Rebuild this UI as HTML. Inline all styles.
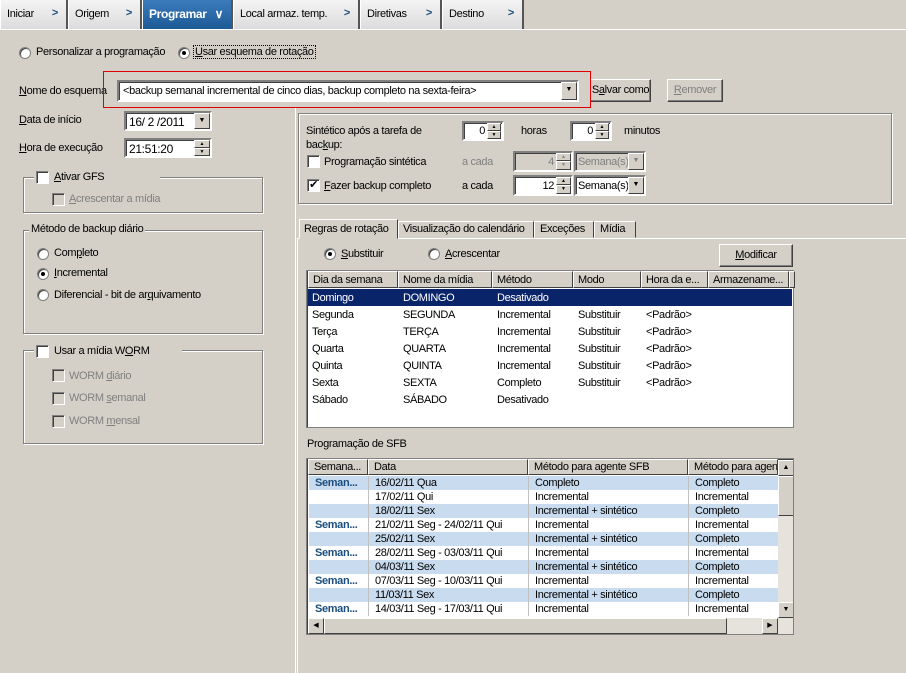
<!DOCTYPE html>
<html><head><meta charset="utf-8"><style>
*{box-sizing:border-box}
body{margin:0;width:906px;height:673px;overflow:hidden;background:#d4d0c8;font-family:"Liberation Sans",sans-serif;font-size:11px;letter-spacing:-0.35px;color:#000;position:relative}
.a{position:absolute;white-space:nowrap}
.tab{position:absolute;top:0;height:29px;background:linear-gradient(#f4f4f4,#dcdcdc);border-right:2px solid #555;border-left:1px solid #fff;padding:8px 0 0 6px;font-size:11px;white-space:nowrap}
.tab .ch{position:absolute;right:8px;top:7px;color:#1b4e7e;font-weight:bold}
.sunk{position:absolute;background:#fff;border:2px solid;border-color:#808080 #fff #fff #808080;box-shadow:inset 1px 1px 0 #404040;white-space:nowrap;overflow:hidden}
.btn{position:absolute;background:#d4d0c8;border:1px solid;border-color:#fff #404040 #404040 #fff;box-shadow:inset -1px -1px 0 #808080;text-align:center;padding-top:4px;white-space:nowrap}
.grp{position:absolute;border:1px solid #808080;box-shadow:1px 1px 0 #fff,inset 1px 1px 0 #fff}
.rad{position:absolute;width:12px;height:12px;border-radius:50%;background:#fff;border:1px solid #808080;box-shadow:inset 1px 1px 0 #404040}
.rad.on::after{content:"";position:absolute;left:3px;top:3px;width:4px;height:4px;border-radius:50%;background:#000}
.cb{position:absolute;width:13px;height:13px;background:#fff;border:1px solid;border-color:#808080 #fff #fff #808080;box-shadow:inset 1px 1px 0 #404040;font-size:11px;line-height:11px;text-align:center}
.cb.dis{background:#d4d0c8}
.dis{color:#808080}
.arr{position:absolute;background:#d4d0c8;border:1px solid;border-color:#fff #404040 #404040 #fff;font-size:7px;text-align:center;line-height:14px;letter-spacing:0}
.lbx{position:absolute;background:#fff;border:1px solid #808080;box-shadow:inset 1px 1px 0 #404040}
.hd{position:absolute;top:0;height:17px;background:#d4d0c8;border:1px solid;border-color:#fff #404040 #404040 #fff;padding:2px 4px;overflow:hidden;white-space:nowrap}
.row{position:absolute;left:1px;right:1px;height:17px}
.row span{position:absolute;top:3px;white-space:nowrap}
.g{position:absolute;left:1px;width:470px;height:14px}
.g span{position:absolute;top:1px;white-space:nowrap}
.g.b{background:#c9dcef}
.g.w{background:#fff}
u{text-decoration:underline}
</style></head><body>
<div class="a" style="left:0;top:29px;width:906px;height:1px;background:#fff"></div>
<div class="tab" style="left:0;width:68px">Iniciar<span class="ch">&gt;</span></div>
<div class="tab" style="left:68px;width:74px">Origem<span class="ch">&gt;</span></div>
<div class="tab" style="left:142px;width:91px;background:linear-gradient(#3c7cbc,#1c5a96);color:#fff;font-weight:bold;font-size:12px;padding-top:7px">Programar<span class="ch" style="color:#fff">&#8744;</span></div>
<div class="tab" style="left:233px;width:127px">Local armaz. temp.<span class="ch">&gt;</span></div>
<div class="tab" style="left:360px;width:82px">Diretivas<span class="ch">&gt;</span></div>
<div class="tab" style="left:442px;width:82px">Destino<span class="ch">&gt;</span></div>

<div class="rad" style="left:19px;top:47px"></div><div class="a" style="left:36px;top:46px">Personalizar a programação</div>
<div class="rad on" style="left:178px;top:47px"></div><div class="a" style="left:193px;top:45px;border:1px dotted #000;padding:0 1px"><u>U</u>sar esquema de rotação</div>

<div class="a" style="left:19px;top:85px"><u>N</u>ome do esquema</div>
<div class="sunk" style="left:117px;top:80px;width:462px;height:22px;padding:3px 4px">&lt;backup semanal incremental de cinco dias, backup completo na sexta-feira&gt;</div>
<div class="arr" style="left:561px;top:82px;width:16px;height:18px">&#9660;</div>
<div class="btn" style="left:590px;top:79px;width:61px;height:23px">S<u>a</u>lvar como</div>
<div class="btn dis" style="left:667px;top:79px;width:56px;height:23px"><u>R</u>emover</div>
<div class="a" style="left:103px;top:71px;width:488px;height:37px;border:1px solid #e00000"></div>

<div class="a" style="left:19px;top:114px"><u>D</u>ata de início</div>
<div class="sunk" style="left:124px;top:111px;width:88px;height:20px;padding:2px 3px;font-size:12px">16/ 2 /2011</div>
<div class="arr" style="left:194px;top:113px;width:16px;height:16px">&#9660;</div>
<div class="a" style="left:19px;top:142px"><u>H</u>ora de execução</div>
<div class="sunk" style="left:124px;top:138px;width:88px;height:20px;padding:2px 3px;font-size:12px">21:51:20</div>
<div class="arr" style="left:194px;top:140px;width:16px;height:8px;line-height:6px;font-size:5px">▲</div>
<div class="arr" style="left:194px;top:148px;width:16px;height:8px;line-height:6px;font-size:5px">▼</div>

<div class="grp" style="left:23px;top:177px;width:240px;height:36px"></div>
<div class="a" style="left:34px;top:170px;background:#d4d0c8;width:126px;height:14px"></div>
<div class="cb" style="left:36px;top:171px"></div><div class="a" style="left:54px;top:171px"><u>A</u>tivar GFS</div>
<div class="cb dis" style="left:52px;top:193px"></div><div class="a dis" style="left:69px;top:193px"><u>A</u>crescentar a mídia</div>

<div class="grp" style="left:23px;top:230px;width:240px;height:104px"></div>
<div class="a" style="left:29px;top:223px;background:#d4d0c8;padding:0 2px">Método de backup diário</div>
<div class="rad" style="left:37px;top:248px"></div><div class="a" style="left:54px;top:247px">Com<u>p</u>leto</div>
<div class="rad on" style="left:37px;top:268px"></div><div class="a" style="left:54px;top:267px"><u>I</u>ncremental</div>
<div class="rad" style="left:37px;top:289px"></div><div class="a" style="left:54px;top:289px">Diferencial - bit de ar<u>q</u>uivamento</div>

<div class="grp" style="left:23px;top:350px;width:240px;height:94px"></div>
<div class="a" style="left:34px;top:343px;background:#d4d0c8;width:148px;height:14px"></div>
<div class="cb" style="left:36px;top:345px"></div><div class="a" style="left:54px;top:345px">Usar a mídia W<u>O</u>RM</div>
<div class="cb dis" style="left:52px;top:369px"></div><div class="a dis" style="left:69px;top:370px">WORM <u>d</u>iário</div>
<div class="cb dis" style="left:52px;top:392px"></div><div class="a dis" style="left:69px;top:392px">WORM <u>s</u>emanal</div>
<div class="cb dis" style="left:52px;top:415px"></div><div class="a dis" style="left:69px;top:415px">WORM <u>m</u>ensal</div>

<div class="a" style="left:295px;top:108px;width:1px;height:565px;background:#fff"></div>
<div class="grp" style="left:298px;top:113px;width:594px;height:91px"></div>
<div class="a" style="left:306px;top:124px;line-height:14px">Sintético após a tarefa de<br>bac<u>k</u>up:</div>
<div class="sunk" style="left:462px;top:121px;width:42px;height:20px;text-align:right;padding:2px 17px 0 0">0</div>
<div class="arr" style="left:487px;top:123px;width:14px;height:8px;font-size:5px;line-height:6px">▲</div><div class="arr" style="left:487px;top:131px;width:14px;height:8px;font-size:5px;line-height:6px">▼</div>
<div class="a" style="left:521px;top:125px">horas</div>
<div class="sunk" style="left:570px;top:121px;width:42px;height:20px;text-align:right;padding:2px 17px 0 0">0</div>
<div class="arr" style="left:595px;top:123px;width:14px;height:8px;font-size:5px;line-height:6px">▲</div><div class="arr" style="left:595px;top:131px;width:14px;height:8px;font-size:5px;line-height:6px">▼</div>
<div class="a" style="left:624px;top:125px">minutos</div>
<div class="cb" style="left:307px;top:155px"></div><div class="a" style="left:324px;top:156px">Programação sintética</div>
<div class="a dis" style="left:462px;top:156px">a cada</div>
<div class="sunk" style="left:513px;top:151px;width:60px;height:21px;background:#d4d0c8;color:#808080;text-align:right;padding:3px 17px 0 0">4</div>
<div class="arr" style="left:556px;top:153px;width:15px;height:8px;font-size:5px;line-height:6px;color:#808080">▲</div><div class="arr" style="left:556px;top:161px;width:15px;height:9px;font-size:5px;line-height:6px;color:#808080">▼</div>
<div class="sunk" style="left:574px;top:151px;width:72px;height:21px;background:#d4d0c8;color:#808080;padding:3px 2px">Semana(s)</div>
<div class="arr" style="left:628px;top:153px;width:16px;height:17px;color:#808080">▼</div>
<div class="cb" style="left:307px;top:179px">✔</div><div class="a" style="left:324px;top:180px"><u>F</u>azer backup completo</div>
<div class="a" style="left:462px;top:180px">a cada</div>
<div class="sunk" style="left:513px;top:175px;width:60px;height:21px;text-align:right;padding:3px 17px 0 0">12</div>
<div class="arr" style="left:556px;top:177px;width:15px;height:8px;font-size:5px;line-height:6px">▲</div><div class="arr" style="left:556px;top:185px;width:15px;height:9px;font-size:5px;line-height:6px">▼</div>
<div class="sunk" style="left:574px;top:175px;width:72px;height:21px;padding:3px 2px">Semana(s)</div>
<div class="arr" style="left:628px;top:177px;width:16px;height:17px">▼</div>

<div class="a" style="left:297px;top:238px;width:609px;height:1px;background:#fff"></div>
<div class="a" style="left:297px;top:238px;width:1px;height:435px;background:#fff"></div>
<div class="a" style="left:299px;top:219px;width:99px;height:20px;background:#d4d0c8;border:1px solid;border-color:#fff #404040 transparent #fff;padding:3px 4px">Regras de rotação</div>
<div class="a" style="left:398px;top:221px;width:136px;height:17px;border:1px solid;border-color:#fff #404040 transparent #fff;padding:1px 4px">Visualização do calendário</div>
<div class="a" style="left:534px;top:221px;width:60px;height:17px;border:1px solid;border-color:#fff #404040 transparent #fff;padding:1px 5px">Exceções</div>
<div class="a" style="left:594px;top:221px;width:42px;height:17px;border:1px solid;border-color:#fff #404040 transparent #fff;padding:1px 5px">Mídia</div>

<div class="rad on" style="left:324px;top:248px"></div><div class="a" style="left:341px;top:248px"><u>S</u>ubstituir</div>
<div class="rad" style="left:428px;top:248px"></div><div class="a" style="left:445px;top:248px"><u>A</u>crescentar</div>
<div class="btn" style="left:719px;top:244px;width:74px;height:23px"><u>M</u>odificar</div>

<div class="lbx" style="left:306px;top:270px;width:488px;height:158px">
<div class="hd" style="left:1px;width:90px">Dia da semana</div>
<div class="hd" style="left:91px;width:94px">Nome da mídia</div>
<div class="hd" style="left:185px;width:81px">Método</div>
<div class="hd" style="left:266px;width:68px">Modo</div>
<div class="hd" style="left:334px;width:67px">Hora da e...</div>
<div class="hd" style="left:401px;width:81px">Armazename...</div>
<div class="hd" style="left:482px;width:6px;padding:0"></div>
<div class="row" style="top:18px;background:#0a246a;color:#fff"><span style="left:4px">Domingo</span><span style="left:95px">DOMINGO</span><span style="left:189px">Desativado</span></div>
<div class="row" style="top:35px"><span style="left:4px">Segunda</span><span style="left:95px">SEGUNDA</span><span style="left:189px">Incremental</span><span style="left:270px">Substituir</span><span style="left:338px">&lt;Padrão&gt;</span></div>
<div class="row" style="top:52px"><span style="left:4px">Terça</span><span style="left:95px">TERÇA</span><span style="left:189px">Incremental</span><span style="left:270px">Substituir</span><span style="left:338px">&lt;Padrão&gt;</span></div>
<div class="row" style="top:69px"><span style="left:4px">Quarta</span><span style="left:95px">QUARTA</span><span style="left:189px">Incremental</span><span style="left:270px">Substituir</span><span style="left:338px">&lt;Padrão&gt;</span></div>
<div class="row" style="top:86px"><span style="left:4px">Quinta</span><span style="left:95px">QUINTA</span><span style="left:189px">Incremental</span><span style="left:270px">Substituir</span><span style="left:338px">&lt;Padrão&gt;</span></div>
<div class="row" style="top:103px"><span style="left:4px">Sexta</span><span style="left:95px">SEXTA</span><span style="left:189px">Completo</span><span style="left:270px">Substituir</span><span style="left:338px">&lt;Padrão&gt;</span></div>
<div class="row" style="top:120px"><span style="left:4px">Sábado</span><span style="left:95px">SÁBADO</span><span style="left:189px">Desativado</span></div>
</div>

<div class="a" style="left:307px;top:438px">Programação de SFB</div>
<div class="lbx" style="left:306px;top:458px;width:488px;height:177px;overflow:hidden">
<div class="hd" style="left:1px;width:60px;height:16px;padding:1px 5px">Semana...</div>
<div class="hd" style="left:61px;width:160px;height:16px;padding:1px 5px">Data</div>
<div class="hd" style="left:221px;width:160px;height:16px;padding:1px 5px">Método para agente SFB</div>
<div class="hd" style="left:381px;width:90px;height:16px;padding:1px 5px">Método para agente</div>
<div style="position:absolute;top:17px;left:1px;width:470px;height:140px">
<div class="g b" style="top:0"><span style="left:6px;color:#1b4e7e;font-weight:bold">Seman...</span><span style="left:66px">16/02/11 Qua</span><span style="left:226px">Completo</span><span style="left:386px">Completo</span></div>
<div class="g w" style="top:14px"><span style="left:66px">17/02/11 Qui</span><span style="left:226px">Incremental</span><span style="left:386px">Incremental</span></div>
<div class="g b" style="top:28px"><span style="left:66px">18/02/11 Sex</span><span style="left:226px">Incremental + sintético</span><span style="left:386px">Completo</span></div>
<div class="g w" style="top:42px"><span style="left:6px;color:#1b4e7e;font-weight:bold">Seman...</span><span style="left:66px">21/02/11 Seg - 24/02/11 Qui</span><span style="left:226px">Incremental</span><span style="left:386px">Incremental</span></div>
<div class="g b" style="top:56px"><span style="left:66px">25/02/11 Sex</span><span style="left:226px">Incremental + sintético</span><span style="left:386px">Completo</span></div>
<div class="g w" style="top:70px"><span style="left:6px;color:#1b4e7e;font-weight:bold">Seman...</span><span style="left:66px">28/02/11 Seg - 03/03/11 Qui</span><span style="left:226px">Incremental</span><span style="left:386px">Incremental</span></div>
<div class="g b" style="top:84px"><span style="left:66px">04/03/11 Sex</span><span style="left:226px">Incremental + sintético</span><span style="left:386px">Completo</span></div>
<div class="g w" style="top:98px"><span style="left:6px;color:#1b4e7e;font-weight:bold">Seman...</span><span style="left:66px">07/03/11 Seg - 10/03/11 Qui</span><span style="left:226px">Incremental</span><span style="left:386px">Incremental</span></div>
<div class="g b" style="top:112px"><span style="left:66px">11/03/11 Sex</span><span style="left:226px">Incremental + sintético</span><span style="left:386px">Completo</span></div>
<div class="g w" style="top:126px"><span style="left:6px;color:#1b4e7e;font-weight:bold">Seman...</span><span style="left:66px">14/03/11 Seg - 17/03/11 Qui</span><span style="left:226px">Incremental</span><span style="left:386px">Incremental</span></div>
<div style="position:absolute;left:60px;top:0;width:1px;height:140px;background:#c0c0c0"></div>
<div style="position:absolute;left:220px;top:0;width:1px;height:140px;background:#c0c0c0"></div>
<div style="position:absolute;left:380px;top:0;width:1px;height:140px;background:#c0c0c0"></div>
</div>
<div style="position:absolute;left:471px;top:1px;width:16px;height:158px;background:#e6e3dc"></div>
<div class="arr" style="left:471px;top:1px;width:16px;height:16px;font-size:7px">▲</div>
<div class="arr" style="left:471px;top:17px;width:16px;height:40px"></div>
<div class="arr" style="left:471px;top:143px;width:16px;height:16px;font-size:7px">▼</div>
<div style="position:absolute;left:1px;top:159px;width:486px;height:16px;background:#e6e3dc"></div>
<div class="arr" style="left:1px;top:159px;width:16px;height:16px;font-size:7px">◀</div>
<div class="arr" style="left:17px;top:159px;width:403px;height:16px"></div>
<div class="arr" style="left:455px;top:159px;width:16px;height:16px;font-size:7px">▶</div>
</div>
</body></html>
